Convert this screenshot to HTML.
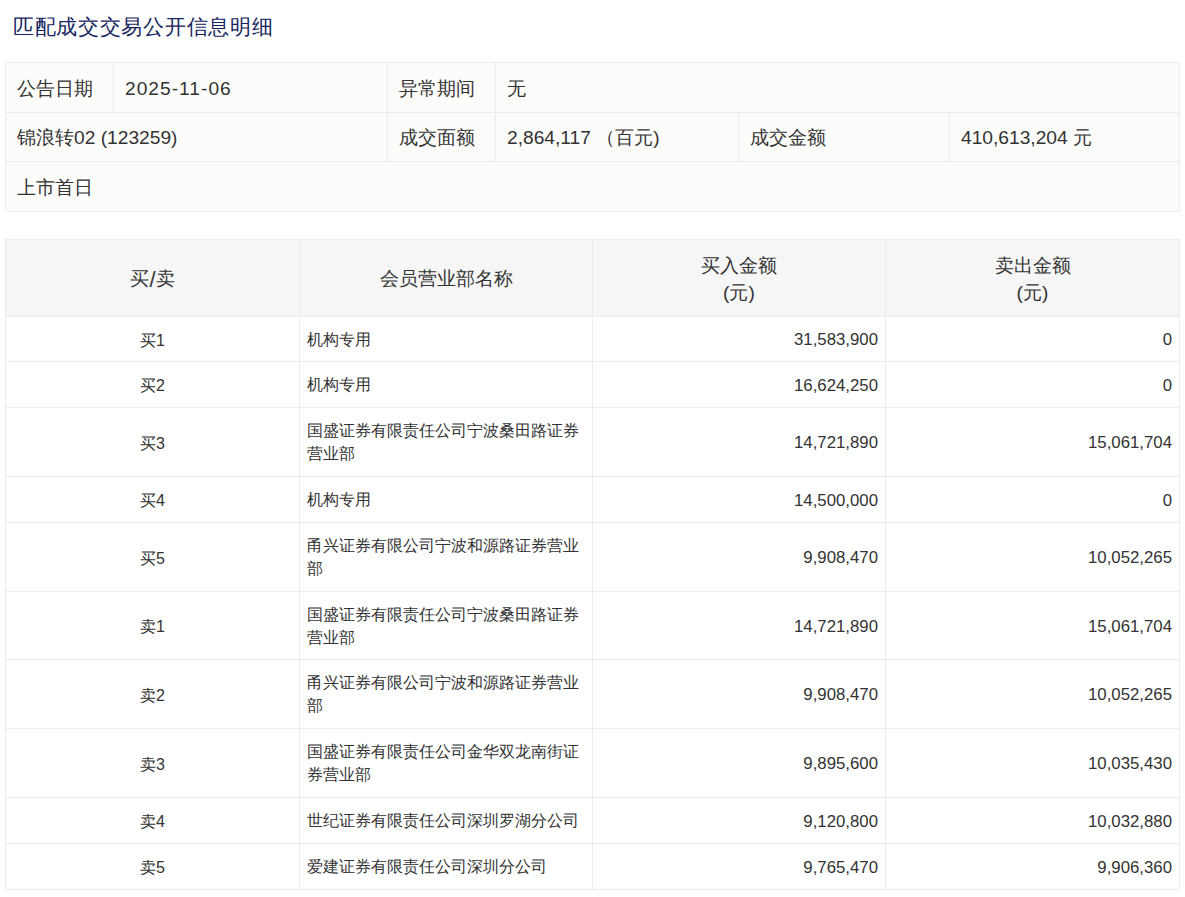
<!DOCTYPE html>
<html><head><meta charset="utf-8">
<style>
html,body{margin:0;padding:0;background:#fff;}
body{width:1185px;height:897px;position:relative;overflow:hidden;font-family:"Liberation Sans",sans-serif;color:#333333;}
.l{position:absolute;}
.c{position:absolute;display:flex;align-items:center;box-sizing:border-box;white-space:nowrap;}
.title{position:absolute;left:13px;top:12px;font-size:21px;letter-spacing:0.7px;line-height:30px;color:#15255e;white-space:nowrap;}
</style></head><body>
<div class="title">匹配成交交易公开信息明细</div>
<div class="l" style="left:5px;top:62px;width:1175px;height:150px;background:#fcfcfa"></div>
<div class="l" style="left:5px;top:62px;width:1175px;height:1px;background:#ececec"></div>
<div class="l" style="left:5px;top:112px;width:1175px;height:1px;background:#ececec"></div>
<div class="l" style="left:5px;top:161px;width:1175px;height:1px;background:#ececec"></div>
<div class="l" style="left:5px;top:211px;width:1175px;height:1px;background:#ececec"></div>
<div class="l" style="left:5px;top:62px;width:1px;height:150px;background:#ececec"></div>
<div class="l" style="left:1179px;top:62px;width:1px;height:150px;background:#ececec"></div>
<div class="l" style="left:113px;top:62px;width:1px;height:51px;background:#ececec"></div>
<div class="l" style="left:387px;top:62px;width:1px;height:51px;background:#ececec"></div>
<div class="l" style="left:495px;top:62px;width:1px;height:51px;background:#ececec"></div>
<div class="l" style="left:387px;top:112px;width:1px;height:50px;background:#ececec"></div>
<div class="l" style="left:495px;top:112px;width:1px;height:50px;background:#ececec"></div>
<div class="l" style="left:738px;top:112px;width:1px;height:50px;background:#ececec"></div>
<div class="l" style="left:949px;top:112px;width:1px;height:50px;background:#ececec"></div>
<div class="c" style="left:6px;top:63px;width:107px;height:49px;justify-content:flex-start;text-align:left;font-size:19.2px;padding:0 11px;padding-top:2px;"><span>公告日期</span></div>
<div class="c" style="left:114px;top:63px;width:273px;height:49px;justify-content:flex-start;text-align:left;font-size:19.2px;padding:0 11px;padding-top:2px;"><span><span style="letter-spacing:1px">2025-11-06</span></span></div>
<div class="c" style="left:388px;top:63px;width:107px;height:49px;justify-content:flex-start;text-align:left;font-size:19.2px;padding:0 11px;padding-top:2px;"><span>异常期间</span></div>
<div class="c" style="left:496px;top:63px;width:683px;height:49px;justify-content:flex-start;text-align:left;font-size:19.2px;padding:0 11px;padding-top:2px;"><span>无</span></div>
<div class="c" style="left:6px;top:113px;width:381px;height:48px;justify-content:flex-start;text-align:left;font-size:19.2px;padding:0 11px;padding-top:2px;"><span>锦浪转<span style="font-size:19.2px">02 (123259)</span></span></div>
<div class="c" style="left:388px;top:113px;width:107px;height:48px;justify-content:flex-start;text-align:left;font-size:19.2px;padding:0 11px;padding-top:2px;"><span>成交面额</span></div>
<div class="c" style="left:496px;top:113px;width:242px;height:48px;justify-content:flex-start;text-align:left;font-size:19.2px;padding:0 11px;padding-top:2px;"><span><span style="font-size:19.2px">2,864,117</span> （百元<span style="font-size:19.2px">)</span></span></div>
<div class="c" style="left:739px;top:113px;width:210px;height:48px;justify-content:flex-start;text-align:left;font-size:19.2px;padding:0 11px;padding-top:2px;"><span>成交金额</span></div>
<div class="c" style="left:950px;top:113px;width:229px;height:48px;justify-content:flex-start;text-align:left;font-size:19.2px;padding:0 11px;padding-top:2px;"><span><span style="font-size:19.2px">410,613,204 </span>元</span></div>
<div class="c" style="left:6px;top:162px;width:1173px;height:49px;justify-content:flex-start;text-align:left;font-size:19.2px;padding:0 11px;padding-top:2px;"><span>上市首日</span></div>
<div class="l" style="left:5px;top:239px;width:1175px;height:77px;background:#f6f6f6"></div>
<div class="l" style="left:5px;top:316px;width:1175px;height:574px;background:#ffffff"></div>
<div class="l" style="left:5px;top:239px;width:1175px;height:1px;background:#ececec"></div>
<div class="l" style="left:5px;top:316px;width:1175px;height:1px;background:#ececec"></div>
<div class="l" style="left:5px;top:361px;width:1175px;height:1px;background:#ececec"></div>
<div class="l" style="left:5px;top:407px;width:1175px;height:1px;background:#ececec"></div>
<div class="l" style="left:5px;top:476px;width:1175px;height:1px;background:#ececec"></div>
<div class="l" style="left:5px;top:522px;width:1175px;height:1px;background:#ececec"></div>
<div class="l" style="left:5px;top:591px;width:1175px;height:1px;background:#ececec"></div>
<div class="l" style="left:5px;top:659px;width:1175px;height:1px;background:#ececec"></div>
<div class="l" style="left:5px;top:728px;width:1175px;height:1px;background:#ececec"></div>
<div class="l" style="left:5px;top:797px;width:1175px;height:1px;background:#ececec"></div>
<div class="l" style="left:5px;top:843px;width:1175px;height:1px;background:#ececec"></div>
<div class="l" style="left:5px;top:889px;width:1175px;height:1px;background:#ececec"></div>
<div class="l" style="left:5px;top:239px;width:1px;height:651px;background:#ececec"></div>
<div class="l" style="left:299px;top:239px;width:1px;height:651px;background:#ececec"></div>
<div class="l" style="left:592px;top:239px;width:1px;height:651px;background:#ececec"></div>
<div class="l" style="left:885px;top:239px;width:1px;height:651px;background:#ececec"></div>
<div class="l" style="left:1179px;top:239px;width:1px;height:651px;background:#ececec"></div>
<div class="c" style="left:6px;top:240px;width:293px;height:76px;justify-content:center;text-align:center;font-size:19.2px;padding:0 11px;padding-top:2px;"><span>买<span style="font-size:22px;line-height:1;position:relative;top:2px">/</span>卖</span></div>
<div class="c" style="left:300px;top:240px;width:292px;height:76px;justify-content:center;text-align:center;font-size:19.2px;padding:0 11px;padding-top:2px;"><span>会员营业部名称</span></div>
<div class="c" style="left:593px;top:240px;width:292px;height:76px;justify-content:center;text-align:center;font-size:19.2px;padding:0 11px;line-height:27px;padding-top:2px;"><span>买入金额<br>(元)</span></div>
<div class="c" style="left:886px;top:240px;width:293px;height:76px;justify-content:center;text-align:center;font-size:19.2px;padding:0 11px;line-height:27px;padding-top:2px;"><span>卖出金额<br>(元)</span></div>
<div class="c" style="left:6px;top:317px;width:293px;height:44px;justify-content:center;text-align:center;font-size:16px;padding:0 7px;padding-top:4px;"><span>买1</span></div>
<div class="c" style="left:300px;top:317px;width:292px;height:44px;justify-content:flex-start;text-align:left;font-size:16px;padding:0 7px;line-height:23px;padding-top:0px;"><span>机构专用</span></div>
<div class="c" style="left:593px;top:317px;width:292px;height:44px;justify-content:flex-end;text-align:right;font-size:16px;padding:0 7px;padding-top:2px;"><span><span style="font-size:16.8px">31,583,900</span></span></div>
<div class="c" style="left:886px;top:317px;width:293px;height:44px;justify-content:flex-end;text-align:right;font-size:16px;padding:0 7px;padding-top:2px;"><span><span style="font-size:16.8px">0</span></span></div>
<div class="c" style="left:6px;top:362px;width:293px;height:45px;justify-content:center;text-align:center;font-size:16px;padding:0 7px;padding-top:4px;"><span>买2</span></div>
<div class="c" style="left:300px;top:362px;width:292px;height:45px;justify-content:flex-start;text-align:left;font-size:16px;padding:0 7px;line-height:23px;padding-top:0px;"><span>机构专用</span></div>
<div class="c" style="left:593px;top:362px;width:292px;height:45px;justify-content:flex-end;text-align:right;font-size:16px;padding:0 7px;padding-top:2px;"><span><span style="font-size:16.8px">16,624,250</span></span></div>
<div class="c" style="left:886px;top:362px;width:293px;height:45px;justify-content:flex-end;text-align:right;font-size:16px;padding:0 7px;padding-top:2px;"><span><span style="font-size:16.8px">0</span></span></div>
<div class="c" style="left:6px;top:408px;width:293px;height:68px;justify-content:center;text-align:center;font-size:16px;padding:0 7px;padding-top:4px;"><span>买3</span></div>
<div class="c" style="left:300px;top:408px;width:292px;height:68px;justify-content:flex-start;text-align:left;font-size:16px;padding:0 7px;line-height:23px;padding-top:0px;"><span>国盛证券有限责任公司宁波桑田路证券<br>营业部</span></div>
<div class="c" style="left:593px;top:408px;width:292px;height:68px;justify-content:flex-end;text-align:right;font-size:16px;padding:0 7px;padding-top:2px;"><span><span style="font-size:16.8px">14,721,890</span></span></div>
<div class="c" style="left:886px;top:408px;width:293px;height:68px;justify-content:flex-end;text-align:right;font-size:16px;padding:0 7px;padding-top:2px;"><span><span style="font-size:16.8px">15,061,704</span></span></div>
<div class="c" style="left:6px;top:477px;width:293px;height:45px;justify-content:center;text-align:center;font-size:16px;padding:0 7px;padding-top:4px;"><span>买4</span></div>
<div class="c" style="left:300px;top:477px;width:292px;height:45px;justify-content:flex-start;text-align:left;font-size:16px;padding:0 7px;line-height:23px;padding-top:0px;"><span>机构专用</span></div>
<div class="c" style="left:593px;top:477px;width:292px;height:45px;justify-content:flex-end;text-align:right;font-size:16px;padding:0 7px;padding-top:2px;"><span><span style="font-size:16.8px">14,500,000</span></span></div>
<div class="c" style="left:886px;top:477px;width:293px;height:45px;justify-content:flex-end;text-align:right;font-size:16px;padding:0 7px;padding-top:2px;"><span><span style="font-size:16.8px">0</span></span></div>
<div class="c" style="left:6px;top:523px;width:293px;height:68px;justify-content:center;text-align:center;font-size:16px;padding:0 7px;padding-top:4px;"><span>买5</span></div>
<div class="c" style="left:300px;top:523px;width:292px;height:68px;justify-content:flex-start;text-align:left;font-size:16px;padding:0 7px;line-height:23px;padding-top:0px;"><span>甬兴证券有限公司宁波和源路证券营业<br>部</span></div>
<div class="c" style="left:593px;top:523px;width:292px;height:68px;justify-content:flex-end;text-align:right;font-size:16px;padding:0 7px;padding-top:2px;"><span><span style="font-size:16.8px">9,908,470</span></span></div>
<div class="c" style="left:886px;top:523px;width:293px;height:68px;justify-content:flex-end;text-align:right;font-size:16px;padding:0 7px;padding-top:2px;"><span><span style="font-size:16.8px">10,052,265</span></span></div>
<div class="c" style="left:6px;top:592px;width:293px;height:67px;justify-content:center;text-align:center;font-size:16px;padding:0 7px;padding-top:4px;"><span>卖1</span></div>
<div class="c" style="left:300px;top:592px;width:292px;height:67px;justify-content:flex-start;text-align:left;font-size:16px;padding:0 7px;line-height:23px;padding-top:0px;"><span>国盛证券有限责任公司宁波桑田路证券<br>营业部</span></div>
<div class="c" style="left:593px;top:592px;width:292px;height:67px;justify-content:flex-end;text-align:right;font-size:16px;padding:0 7px;padding-top:2px;"><span><span style="font-size:16.8px">14,721,890</span></span></div>
<div class="c" style="left:886px;top:592px;width:293px;height:67px;justify-content:flex-end;text-align:right;font-size:16px;padding:0 7px;padding-top:2px;"><span><span style="font-size:16.8px">15,061,704</span></span></div>
<div class="c" style="left:6px;top:660px;width:293px;height:68px;justify-content:center;text-align:center;font-size:16px;padding:0 7px;padding-top:4px;"><span>卖2</span></div>
<div class="c" style="left:300px;top:660px;width:292px;height:68px;justify-content:flex-start;text-align:left;font-size:16px;padding:0 7px;line-height:23px;padding-top:0px;"><span>甬兴证券有限公司宁波和源路证券营业<br>部</span></div>
<div class="c" style="left:593px;top:660px;width:292px;height:68px;justify-content:flex-end;text-align:right;font-size:16px;padding:0 7px;padding-top:2px;"><span><span style="font-size:16.8px">9,908,470</span></span></div>
<div class="c" style="left:886px;top:660px;width:293px;height:68px;justify-content:flex-end;text-align:right;font-size:16px;padding:0 7px;padding-top:2px;"><span><span style="font-size:16.8px">10,052,265</span></span></div>
<div class="c" style="left:6px;top:729px;width:293px;height:68px;justify-content:center;text-align:center;font-size:16px;padding:0 7px;padding-top:4px;"><span>卖3</span></div>
<div class="c" style="left:300px;top:729px;width:292px;height:68px;justify-content:flex-start;text-align:left;font-size:16px;padding:0 7px;line-height:23px;padding-top:0px;"><span>国盛证券有限责任公司金华双龙南街证<br>券营业部</span></div>
<div class="c" style="left:593px;top:729px;width:292px;height:68px;justify-content:flex-end;text-align:right;font-size:16px;padding:0 7px;padding-top:2px;"><span><span style="font-size:16.8px">9,895,600</span></span></div>
<div class="c" style="left:886px;top:729px;width:293px;height:68px;justify-content:flex-end;text-align:right;font-size:16px;padding:0 7px;padding-top:2px;"><span><span style="font-size:16.8px">10,035,430</span></span></div>
<div class="c" style="left:6px;top:798px;width:293px;height:45px;justify-content:center;text-align:center;font-size:16px;padding:0 7px;padding-top:4px;"><span>卖4</span></div>
<div class="c" style="left:300px;top:798px;width:292px;height:45px;justify-content:flex-start;text-align:left;font-size:16px;padding:0 7px;line-height:23px;padding-top:0px;"><span>世纪证券有限责任公司深圳罗湖分公司</span></div>
<div class="c" style="left:593px;top:798px;width:292px;height:45px;justify-content:flex-end;text-align:right;font-size:16px;padding:0 7px;padding-top:2px;"><span><span style="font-size:16.8px">9,120,800</span></span></div>
<div class="c" style="left:886px;top:798px;width:293px;height:45px;justify-content:flex-end;text-align:right;font-size:16px;padding:0 7px;padding-top:2px;"><span><span style="font-size:16.8px">10,032,880</span></span></div>
<div class="c" style="left:6px;top:844px;width:293px;height:45px;justify-content:center;text-align:center;font-size:16px;padding:0 7px;padding-top:4px;"><span>卖5</span></div>
<div class="c" style="left:300px;top:844px;width:292px;height:45px;justify-content:flex-start;text-align:left;font-size:16px;padding:0 7px;line-height:23px;padding-top:0px;"><span>爱建证券有限责任公司深圳分公司</span></div>
<div class="c" style="left:593px;top:844px;width:292px;height:45px;justify-content:flex-end;text-align:right;font-size:16px;padding:0 7px;padding-top:2px;"><span><span style="font-size:16.8px">9,765,470</span></span></div>
<div class="c" style="left:886px;top:844px;width:293px;height:45px;justify-content:flex-end;text-align:right;font-size:16px;padding:0 7px;padding-top:2px;"><span><span style="font-size:16.8px">9,906,360</span></span></div>
</body></html>
